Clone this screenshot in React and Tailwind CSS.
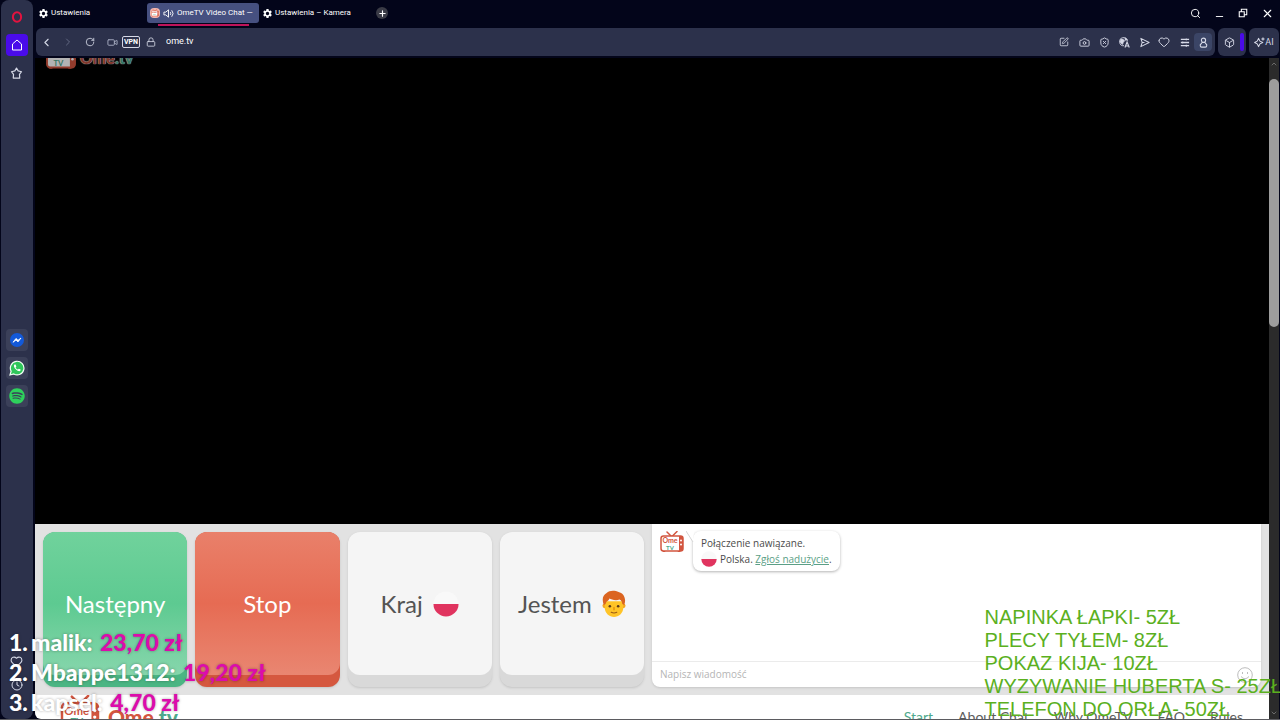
import { useState } from 'react';
import {
    Search, Minus, X, Plus, ChevronLeft, ChevronRight, ChevronUp, ChevronDown, RotateCw, Lock,
    SquarePen, Camera, ShieldX, Heart, Box, Video, Clock, Ellipsis,
} from 'lucide-react';
import { MdSettings } from 'react-icons/md';
import { FaSpotify } from 'react-icons/fa';

const navLinks = ['Start', 'About Chat', 'Why OmeTV', 'FAQ', 'Rules'];

const donators = [
    { name: 'malik', amount: '23,70 zł' },
    { name: 'Mbappe1312', amount: '19,20 zł' },
    { name: 'kapsel', amount: '4,70 zł' },
];

const prices = [
    'NAPINKA ŁAPKI- 5ZŁ',
    'PLECY TYŁEM- 8ZŁ',
    'POKAZ KIJA- 10ZŁ',
    'WYZYWANIE HUBERTA S- 25ZŁ',
    'TELEFON DO ORŁA- 50ZŁ',
];

const TvLogo = ({ className }) => (
    <svg viewBox="0 0 48 44" className={className} aria-hidden="true">
        <path d="M14 2l8 8M34 1l-9 9" stroke="#d2553f" strokeWidth="3" strokeLinecap="round" />
        <path d="M8 38v4M38 38v4" stroke="#d2553f" strokeWidth="5" />
        <rect x="2" y="10" width="44" height="30" rx="5" fill="#fff" stroke="#d2553f" strokeWidth="3" />
        <path d="M38 10h3a5 5 0 0 1 5 5v20a5 5 0 0 1-5 5h-3z" fill="#d2553f" />
        <circle cx="42" cy="19" r="2" fill="#fff" />
        <circle cx="42" cy="27" r="2" fill="#fff" />
        <text x="20" y="24" textAnchor="middle" fontSize="14" fontWeight="700" fontFamily="Lato, sans-serif" fill="#d2553f">Ome</text>
        <text x="20" y="37" textAnchor="middle" fontSize="12" fontWeight="700" fontFamily="Lato, sans-serif" fill="#4fa98c">TV</text>
    </svg>
);

const PolishFlag = ({ className }) => (
    <svg viewBox="0 0 28 28" className={className} aria-hidden="true">
        <circle cx="14" cy="14" r="13.5" fill="#f9f9f9" />
        <path d="M.5 14h27a13.5 13.5 0 0 1-27 0z" fill="#e0345f" />
    </svg>
);

const BoyFace = ({ className }) => (
    <svg viewBox="0 0 26 30" className={className} aria-hidden="true">
        <circle cx="3" cy="17" r="2.5" fill="#f2a51f" />
        <circle cx="23" cy="17" r="2.5" fill="#f2a51f" />
        <path d="M3 12h20v7c0 6-5 10-10 10S3 25 3 19z" fill="#ffc427" />
        <path d="M2 16C-.5 10 1 5 5 3c3-3 9-3 13-1 5 1 9 7 6 14l-2-1c0-2-1-4-3-5-4 2-9 0-11-1-1 3-4 3-4 6z" fill="#db6420" />
        <circle cx="8.5" cy="17.5" r="1.4" fill="#5b3a1c" />
        <circle cx="17.5" cy="17.5" r="1.4" fill="#5b3a1c" />
        <path d="M10 24q3 1.500 6 0" fill="none" stroke="#9a5a14" strokeWidth="1.2" strokeLinecap="round" />
        <path d="M13 19v2" stroke="#eb9c12" strokeWidth="2" strokeLinecap="round" />
    </svg>
);

const MessengerIcon = () => (
    <svg viewBox="0 0 16 16" className="size-4" aria-hidden="true">
        <circle cx="8" cy="8" r="7" fill="#1359d8" />
        <path d="M4 10.300l3-3.900 2 1.900 3-2.300-3 3.900-2-1.900z" fill="#fff" stroke="#fff" strokeWidth=".8" strokeLinejoin="round" />
    </svg>
);

const WhatsAppIcon = () => (
    <svg viewBox="0 0 16 16" className="size-4" aria-hidden="true">
        <path d="M1 15l1.100-3.800A6.800 6.800 0 1 1 4.800 14z" fill="#2fc65a" stroke="#f2fff5" strokeWidth="1.2" />
        <path d="M5.500 4.500c-1.200 1-.5 3 1.300 4.800s3.800 2.600 4.700 1.300l.1-1-1.700-.9-1 .9c-1-.3-1.900-1.300-2.300-2.200l.8-.9-.8-1.900z" fill="#fff" />
    </svg>
);

const SpeakerIcon = () => (
    <svg viewBox="0 0 12 12" className="size-[11px] shrink-0" fill="none" stroke="currentColor" aria-hidden="true">
        <path d="M1 4.500h2L6 2v8L3 7.500H1zM8 4.500q1 1.500 0 3M9.500 2.500q3 3.500 0 7" />
    </svg>
);

const RestoreIcon = () => (
    <svg viewBox="0 0 12 12" className="size-[10px]" fill="none" stroke="currentColor" strokeWidth="1.3" aria-hidden="true">
        <path d="M1.500 4.500h6v6h-6zM4 4.500v-3h6.500V8h-3" />
    </svg>
);

const StarIcon = () => (
    <svg viewBox="0 0 14 14" className="size-[13px]" fill="none" stroke="currentColor" strokeWidth="1.3" strokeLinejoin="round" aria-hidden="true">
        <path d="M7 1.200l1.800 3 3.600.9-2.200 2.900.3 3.900H3.500l.3-3.900L1.600 5.100l3.600-.9z" />
    </svg>
);

const HomeIcon = () => (
    <svg viewBox="0 0 12 12" className="size-3" fill="none" stroke="currentColor" strokeLinejoin="round" aria-hidden="true">
        <path d="M1.500 5L6 1l4.500 4v6h-9z" />
    </svg>
);

const TranslateIcon = () => (
    <svg viewBox="0 0 12 12" className="size-[11px]" fill="none" stroke="currentColor" aria-hidden="true">
        <path d="M5.500 9.500A4.400 4.400 0 1 1 9.300 4" />
        <path d="M2 2.500l3 .5 1 1.500-1.500 1L4 8 1.500 6zM6.500 1l2.500 2-2 .5z" fill="currentColor" />
        <path d="M6.500 11.500l2.300-6 2.400 6M7.300 9.800h3" strokeWidth="1.2" />
    </svg>
);

const SendIcon = () => (
    <svg viewBox="0 0 12 12" className="size-[11px]" fill="none" stroke="currentColor" strokeWidth="1.1" strokeLinejoin="round" aria-hidden="true">
        <path d="M2 1.500L11 6l-9 4.500L3.500 6zM3.500 6H6" />
    </svg>
);

const SlidersIcon = () => (
    <svg viewBox="0 0 12 12" className="size-[11px]" fill="none" stroke="currentColor" strokeWidth="1.4" aria-hidden="true">
        <path d="M2 2.500h9M2 6h9M2 9.500h9M8 1.500v2M4 5v2M8 8.500v2" />
    </svg>
);

const ProfileIcon = () => (
    <svg viewBox="0 0 12 12" className="size-[11px]" fill="none" stroke="currentColor" strokeWidth="1.2" aria-hidden="true">
        <circle cx="6" cy="3.5" r="2.3" />
        <path d="M4.500 6H7.500L9.500 8.500V9.500A1.500 1.500 0 0 1 8 11H4A1.500 1.500 0 0 1 2.500 9.500V8.500z" />
    </svg>
);

const AiIcon = () => (
    <svg viewBox="0 0 12 12" className="size-[11px]" fill="none" stroke="currentColor" strokeWidth="1.2" strokeLinejoin="round" aria-hidden="true">
        <path d="M5 1.500L6.500 4.500 9.500 6 6.500 7.500 5 10.500 3.500 7.500.7 6l2.800-1.500z" />
        <path d="M9.800.5v3.400M8 2.200h3.500" />
    </svg>
);

const IconButton = ({ label, className = 'size-5', children }) => (
    <button type="button" aria-label={label} className={`flex shrink-0 items-center justify-center ${className}`}>
        {children}
    </button>
);

const Sidebar = () => (
    <aside className="ml-px flex w-8 shrink-0 flex-col items-center justify-between rounded-lg bg-[#2c314b] pt-1.5 pr-px text-[#d5d8e6]">
        <div className="flex flex-col items-center gap-1.5">
            <IconButton label="Opera" className="size-[22px]">
                <svg viewBox="0 0 14 14" className="size-3" fill="none" aria-hidden="true">
                    <ellipse cx="7" cy="7" rx="4.8" ry="5.6" stroke="#e3133f" strokeWidth="2.4" />
                </svg>
            </IconButton>
            <IconButton label="Home" className="size-[22px] rounded bg-[#4a0bea] text-white"><HomeIcon /></IconButton>
            <IconButton label="Bookmarks" className="size-[22px]"><StarIcon /></IconButton>
        </div>
        <div className="flex flex-col gap-1.5">
            <IconButton label="Messenger" className="size-[22px] rounded bg-[#3b4059]"><MessengerIcon /></IconButton>
            <IconButton label="WhatsApp" className="size-[22px] rounded bg-[#3b4059]"><WhatsAppIcon /></IconButton>
            <IconButton label="Spotify" className="size-[22px] rounded bg-[#3b4059] text-[#2ed15c]"><FaSpotify size={16} /></IconButton>
        </div>
        <div className="flex flex-col gap-1">
            <IconButton label="Favourites"><Heart size={13} /></IconButton>
            <IconButton label="History"><Clock size={12} /></IconButton>
            <IconButton label="More"><Ellipsis size={12} /></IconButton>
        </div>
    </aside>
);

const TabBar = () => (
    <header className="flex h-7 shrink-0 items-start pr-px text-[8px] text-white">
        <button type="button" className="flex h-[26px] w-28 items-center gap-[2px] pl-[3px]">
            <MdSettings size={11} />
            Ustawienia
        </button>
        <div className="flex w-28 flex-col items-center pt-[3px]">
            <button type="button" className="flex h-5 w-full items-center gap-[3px] rounded-[3px] bg-[#465080] pl-[3px] whitespace-nowrap">
                <span className="flex size-[10px] shrink-0 items-center justify-center rounded-sm bg-[#f3b5ac]"><TvLogo className="size-2" /></span>
                <SpeakerIcon />
                <span>OmeTV Video Chat —</span>
            </button>
            <span className="mt-px h-0.5 w-[91px] bg-[#c0145a]" />
        </div>
        <button type="button" className="flex h-[26px] w-28 items-center gap-[2px] pl-[3px] whitespace-nowrap">
            <MdSettings size={11} />
            Ustawienia – Kamera
        </button>
        <IconButton label="New tab" className="mt-[7px] ml-[5px] size-3 rounded-full bg-[#3a3b46]"><Plus size={9} strokeWidth={3} /></IconButton>
        <div className="ml-auto flex h-[26px] items-center">
            <IconButton label="Search tabs" className="size-6"><Search size={11} /></IconButton>
            <IconButton label="Minimize" className="size-6 pt-1.5"><Minus size={11} /></IconButton>
            <IconButton label="Restore" className="size-6"><RestoreIcon /></IconButton>
            <IconButton label="Close" className="size-6"><X size={13} /></IconButton>
        </div>
    </header>
);

const Toolbar = () => {
    const [address, setAddress] = useState('ome.tv');

    return (
        <div className="mb-0.5 flex h-7 shrink-0 gap-[3px] pl-px pr-px text-[#d5d8e6]">
            <div className="flex min-w-0 flex-1 items-center rounded-md bg-[#2c314b] pr-px">
                <IconButton label="Back"><ChevronLeft size={13} /></IconButton>
                <IconButton label="Forward" className="ml-0.5 size-5 text-[#636983]"><ChevronRight size={12} /></IconButton>
                <IconButton label="Reload" className="ml-0.5 size-5"><RotateCw size={10} /></IconButton>
                <IconButton label="Camera access" className="ml-0.5 size-5 text-[#a9aec3]"><Video size={11} /></IconButton>
                <button type="button" className="h-3 w-[18px] rounded-xs border border-[#d5d8e6] text-[7px] leading-[10px] font-bold text-white">VPN</button>
                <IconButton label="Site details" className="ml-px size-5"><Lock size={10} /></IconButton>
                <input
                    aria-label="Address"
                    value={address}
                    onChange={(e) => setAddress(e.target.value)}
                    className="ml-[5px] min-w-0 flex-1 text-[9px] text-white outline-none"
                />
                <IconButton label="Edit page"><SquarePen size={10} /></IconButton>
                <IconButton label="Snapshot"><Camera size={11} /></IconButton>
                <IconButton label="Ad blocker"><ShieldX size={11} /></IconButton>
                <IconButton label="Translate"><TranslateIcon /></IconButton>
                <IconButton label="Send"><SendIcon /></IconButton>
                <IconButton label="Add to favourites"><Heart size={12} /></IconButton>
                <IconButton label="Easy setup"><SlidersIcon /></IconButton>
                <IconButton label="Profile" className="size-[18px] rounded bg-[#3b4566]"><ProfileIcon /></IconButton>
                <span className="w-0.5" />
            </div>
            <div className="flex w-7 items-center rounded-md bg-[#2c314b]">
                <IconButton label="Extensions" className="size-[22px]"><Box size={11} /></IconButton>
                <span className="h-[18px] w-1 rounded-sm bg-[#4a0bea]" />
            </div>
            <button type="button" className="flex w-[30px] items-center justify-center rounded-md bg-[#2c314b] text-[9px] leading-3">
                <AiIcon />
                <span>AI</span>
            </button>
        </div>
    );
};

const Chat = () => {
    const [message, setMessage] = useState('');

    return (
        <section className="mb-2 flex w-1/2 pr-2">
            <div className="flex min-w-0 flex-1 flex-col rounded-b-lg bg-white font-['Open_Sans',sans-serif] text-[10px] shadow-sm">
                <div className="flex flex-1 items-start pt-[7px] pl-2">
                    <TvLogo className="h-[22px] w-6" />
                    <div className="relative ml-[9px] rounded-lg bg-white px-2 py-1 leading-4 text-[#4b4b4b] shadow-[0_1px_3px_rgba(0,0,0,0.3)]">
                        <svg viewBox="0 0 8 12" className="absolute top-0 -left-[7px] h-3 w-2" aria-hidden="true">
                            <path d="M8 0H0l7 11z" fill="#fff" />
                            <path d="M0 0l7 11" stroke="#d5d5d5" />
                        </svg>
                        <p>Połączenie nawiązane.</p>
                        <p className="flex items-center gap-[3px]">
                            <PolishFlag className="size-4" />
                            <span>Polska. <a href="#report" className="text-[#5b9f86] underline">Zgłoś nadużycie</a>.</span>
                        </p>
                    </div>
                </div>
                <div className="flex h-[26px] items-center border-t border-[#ebebeb] px-2">
                    <input
                        aria-label="Napisz wiadomość"
                        placeholder="Napisz wiadomość"
                        value={message}
                        onChange={(e) => setMessage(e.target.value)}
                        className="min-w-0 flex-1 outline-none placeholder:text-[#b5b5b5]"
                    />
                    <IconButton label="Emoji" className="size-4 text-[#bdbdbd]">
                        <svg viewBox="0 0 16 16" className="size-4" fill="none" stroke="currentColor" aria-hidden="true">
                            <circle cx="8" cy="8" r="7.3" />
                            <path d="M5.500 5v2M10.500 5v2M4 9.500q4 4.500 8 0" />
                        </svg>
                    </IconButton>
                </div>
            </div>
        </section>
    );
};

const Controls = () => (
    <section className="grid w-1/2 grid-cols-4 gap-2 p-2 text-2xl text-[#545454]">
        <button type="button" className="flex flex-col rounded-xl bg-[#4bb583] text-white shadow-sm">
            <span className="flex w-full flex-1 items-center justify-center rounded-xl bg-linear-to-b from-[#70d29c] via-[#5dca91] to-[#86d6ac]">Następny</span>
            <span className="h-3" />
        </button>
        <button type="button" className="flex flex-col rounded-xl bg-[#d5583f] text-white shadow-sm">
            <span className="flex w-full flex-1 items-center justify-center rounded-xl bg-linear-to-b from-[#e9806a] via-[#e66b53] to-[#e98671]">Stop</span>
            <span className="h-3" />
        </button>
        <button type="button" className="flex flex-col rounded-xl bg-[#d9d9d9] shadow-sm">
            <span className="flex w-full flex-1 items-center justify-center gap-2.5 rounded-xl bg-[#f5f5f5]">
                Kraj
                <PolishFlag className="size-[26px]" />
            </span>
            <span className="h-3" />
        </button>
        <button type="button" className="flex flex-col rounded-xl bg-[#d9d9d9] shadow-sm">
            <span className="flex w-full flex-1 items-center justify-center gap-2.5 rounded-xl bg-[#f5f5f5]">
                Jestem
                <BoyFace className="h-7 w-6" />
            </span>
            <span className="h-3" />
        </button>
    </section>
);

const Page = () => (
    <div className="flex min-w-0 flex-1 flex-col overflow-hidden rounded-bl-md font-['Lato',sans-serif]">
        <main className="flex min-h-0 flex-1 flex-col">
            <div className="flex-1 overflow-hidden bg-black">
                <div className="-mt-4 ml-2.5 flex items-end gap-[3px] opacity-70">
                    <TvLogo className="h-7 w-8" />
                    <span className="text-base leading-6 font-black text-[#b8503f] text-shadow-[0_0_1px_#fff,0_0_1px_#fff]">Ome<span className="text-[#4fa98c]">.tv</span></span>
                </div>
            </div>
            <div className="flex h-[171px] shrink-0 bg-[#e2e2e2]">
                <Controls />
                <Chat />
            </div>
        </main>
        <footer className="flex h-6 shrink-0 items-start justify-between overflow-hidden bg-white pr-[26px] pl-[25px]">
            <a href="#home" className="flex items-start gap-2">
                <TvLogo className="h-9 w-10" />
                <span className="mt-1.5 text-[21px] leading-8 font-black text-[#d2553f]">Ome<span className="text-[#4fa98c]">.tv</span></span>
            </a>
            <nav className="flex gap-[25px] pt-3 text-sm leading-5 text-[#5c5c5c]">
                {navLinks.map((link) => (
                    <a key={link} href="#nav" className="first:text-[#4fa98c]">{link}</a>
                ))}
            </nav>
        </footer>
    </div>
);

const Scrollbar = () => (
    <div className="flex w-[10px] shrink-0 flex-col items-center bg-[#2b2b2b] pt-0.5 text-[#8b8b8b]">
        <ChevronUp size={8} />
        <span className="mt-[11px] h-[248px] w-[10px] rounded-full bg-[#9d9d9d]" />
        <ChevronDown size={8} className="mt-auto mb-0.5" />
    </div>
);

const Donators = () => (
    <ol className="absolute bottom-0.5 left-[9px] text-[23px] leading-[30px] font-black whitespace-nowrap text-white font-['Lato',sans-serif] text-shadow-[0_0_3px_rgba(0,0,0,0.35)]">
        {donators.map(({ name, amount }, i) => (
            <li key={name} className="flex">
                <span className="w-[22px]">{i + 1}.</span>
                <span>{name}: <span className="ml-0.5 text-[#dc0cab]">{amount}</span></span>
            </li>
        ))}
    </ol>
);

const PriceList = () => (
    <ul className="absolute -right-0.5 -bottom-0.5 text-xl leading-[23px] whitespace-nowrap text-[#5bb01e] font-['Liberation_Sans',sans-serif]">
        {prices.map((price) => <li key={price}>{price}</li>)}
    </ul>
);

export default function App() {
    return (
        <div className="relative flex h-screen overflow-hidden border-b border-[#5b5b60] bg-[#03051a] font-['Roboto',sans-serif]">
            <Sidebar />
            <div className="ml-0.5 flex min-w-0 flex-1 flex-col">
                <TabBar />
                <Toolbar />
                <div className="flex min-h-0 flex-1 pr-px">
                    <Page />
                    <Scrollbar />
                </div>
            </div>
            <Donators />
            <PriceList />
        </div>
    );
}
